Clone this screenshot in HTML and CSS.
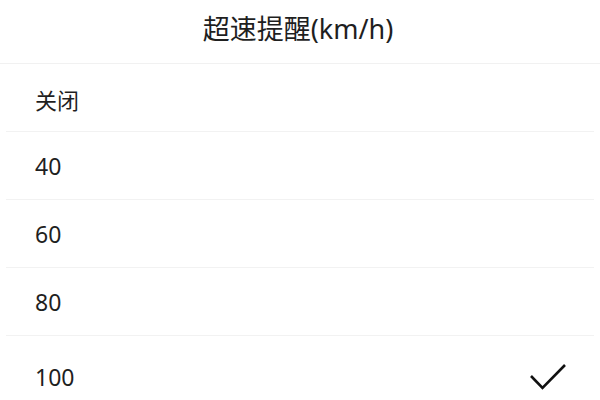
FILE: index.html
```html
<!DOCTYPE html>
<html lang="zh-CN">
<head>
  <meta charset="UTF-8" />
  <meta name="viewport" content="width=device-width, initial-scale=1.0" />
  <title>超速提醒</title>
  <link rel="stylesheet" href="styles.css">
</head>
<body>
  <header class="title">超速提醒(km/h)</header>

  <ul class="options">
    <li class="option label">关闭</li>
    <li class="option">40</li>
    <li class="option">60</li>
    <li class="option">80</li>
    <li class="option selected">
      <span>100</span>
      <svg class="check" width="36" height="26" viewBox="0 0 36 26">
        <polyline points="1,12 12.5,24 35,1" fill="none" stroke="#111" stroke-width="2.6" />
      </svg>
    </li>
  </ul>
</body>
</html>
```

FILE: styles.css
```css
body {
  margin: 0;
  background: #fff;
  color: #1f1f1f;
  font-family: "Noto Sans", "Noto Sans CJK SC", sans-serif;
}
.title {
  height: 55px;
  padding: 0 4px 8px 0;
  display: flex;
  align-items: center;
  justify-content: center;
  font-size: 27px;
  font-weight: 400;
  border-bottom: 1px solid #f1f1f1;
}
.options {
  list-style: none;
  margin: 0;
  padding: 0 6px;
}
.option {
  height: 67px;
  display: flex;
  align-items: center;
  justify-content: space-between;
  padding: 0 28px 0 29px;
  font-size: 23px;
  border-bottom: 1px solid #f2f2f2;
}
.option.label {
  font-size: 22px;
  padding-top: 2px;
  height: 65px;
}
.option.selected {
  height: 82px;
  border-bottom: none;
}
.check {
  display: block;
}
```
